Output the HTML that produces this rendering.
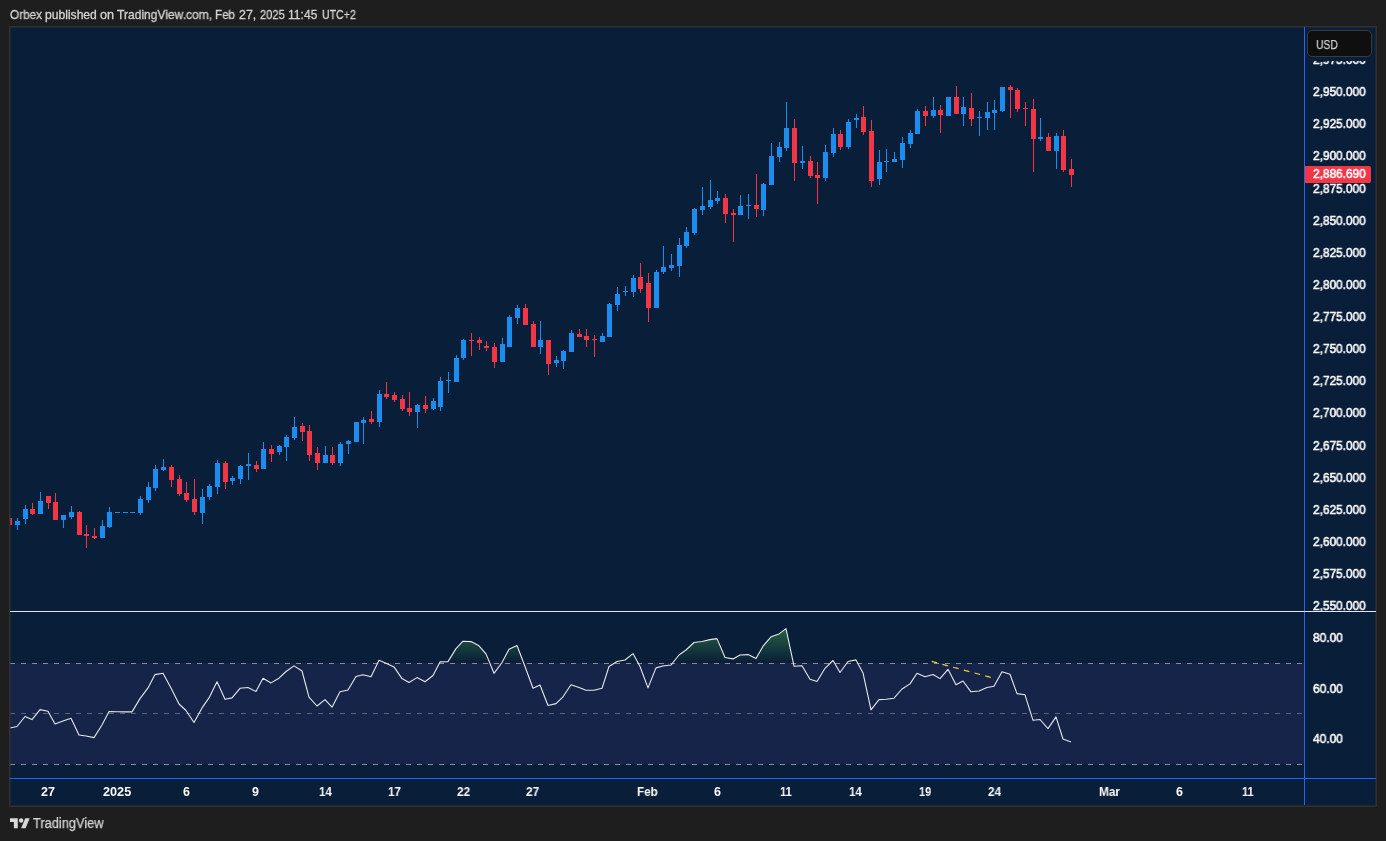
<!DOCTYPE html>
<html><head><meta charset="utf-8"><title>Chart</title>
<style>
html,body{margin:0;padding:0;}
body{width:1386px;height:841px;background:#1e1e1e;overflow:hidden;position:relative;font-family:"Liberation Sans",sans-serif;font-size:12px;color:#e8e8e8;}
.x{position:absolute;height:20px;line-height:20px;white-space:nowrap;transform-origin:0 0;will-change:transform;}
.hdr{position:absolute;left:0;top:0;width:400px;height:26px;}
.h{color:#d4d4d4;display:block;-webkit-text-stroke:0.3px #d4d4d4;}
.p{color:#fcfcfc;-webkit-text-stroke:0.55px #fcfcfc;}
.t{color:#fafafa;font-weight:bold;}
.last{color:#fff;-webkit-text-stroke:0.55px #fff;}
.usd{color:#cfcfcf;-webkit-text-stroke:0.25px #cfcfcf;}
.tv{color:#d4d4d4;-webkit-text-stroke:0.25px #d4d4d4;}
.frame{position:absolute;left:9px;top:26px;width:1366px;height:779px;border:1px solid #303030;background:#091e38;box-sizing:content-box;}
.frame2{position:absolute;left:10px;top:27px;width:1364px;height:777px;border:1px solid rgba(52,50,48,0.5);box-sizing:content-box;}
.chart{position:absolute;left:0;top:0;width:1386px;height:841px;}
svg{position:absolute;left:0;top:0;}
.vline{position:absolute;left:1304px;top:27px;width:1px;height:778px;background:#2962ff;}
.hline{position:absolute;left:10px;top:778px;width:1366px;height:1px;background:#2962ff;}
.sep{position:absolute;left:10px;top:611px;width:1366px;height:1px;background:#e6e8ef;}
.usdcover{position:absolute;left:1305px;top:28px;width:70px;height:32.6px;background:#091e38;}
.usdbox{position:absolute;left:1307.3px;top:30.2px;width:63px;height:25.2px;border:1px solid #3a3a3c;border-radius:5px;background:#0f0f0f;box-sizing:content-box;}
.lastbox{position:absolute;left:1305px;top:166px;width:66px;height:17px;background:#f23645;border-radius:0 2px 2px 0;}
</style></head>
<body>
<div class="hdr"><span class="x h" style="left:9.81px;top:5.25px;font-size:12.1px;transform:scaleX(0.969);">Orbex</span> <span class="x h" style="left:45.38px;top:5.25px;font-size:12.1px;transform:scaleX(1.001);">published</span> <span class="x h" style="left:100.40px;top:5.25px;font-size:12.1px;transform:scaleX(1.042);">on</span> <span class="x h" style="left:117.43px;top:5.25px;font-size:12.1px;transform:scaleX(0.996);">TradingView.com,</span> <span class="x h" style="left:215.43px;top:5.25px;font-size:12.1px;transform:scaleX(0.958);">Feb</span> <span class="x h" style="left:238.90px;top:5.25px;font-size:12.1px;transform:scaleX(1.023);">27,</span> <span class="x h" style="left:259.69px;top:5.25px;font-size:12.1px;transform:scaleX(0.916);">2025</span> <span class="x h" style="left:288.48px;top:5.25px;font-size:12.1px;transform:scaleX(0.995);">11:45</span> <span class="x h" style="left:321.50px;top:5.25px;font-size:12.1px;transform:scaleX(0.877);">UTC+2</span></div>
<div class="frame"></div>
<div class="chart">
<svg width="1386" height="841" viewBox="0 0 1386 841" shape-rendering="crispEdges">
<defs><linearGradient id="g1" x1="0" y1="587" x2="0" y2="663" gradientUnits="userSpaceOnUse"><stop offset="0" stop-color="#4caf50" stop-opacity="1"/><stop offset="1" stop-color="#4caf50" stop-opacity="0"/></linearGradient>
<clipPath id="area"><rect x="10" y="27" width="1294" height="751"/></clipPath></defs>
<g clip-path="url(#area)">
<rect x="10" y="663" width="1294" height="101" fill="#16244a"/>
<line x1="10" y1="663.5" x2="1304" y2="663.5" stroke="#8a8c93" stroke-width="1" stroke-dasharray="5 6" stroke-dashoffset="0"/>
<line x1="10" y1="713.5" x2="1304" y2="713.5" stroke="#5e6478" stroke-width="1" stroke-dasharray="5 6" stroke-dashoffset="0"/>
<line x1="10" y1="764.5" x2="1304" y2="764.5" stroke="#8a8c93" stroke-width="1" stroke-dasharray="5 6" stroke-dashoffset="0"/>
<rect x="9" y="518" width="1" height="7" fill="#f23645"/>
<rect x="7" y="518" width="5" height="7" fill="#f23645"/>
<rect x="17" y="518" width="1" height="12" fill="#1c8cee"/>
<rect x="15" y="521" width="5" height="4" fill="#1c8cee"/>
<rect x="25" y="505" width="1" height="19" fill="#1c8cee"/>
<rect x="23" y="509" width="5" height="10" fill="#1c8cee"/>
<rect x="32" y="503" width="1" height="12" fill="#f23645"/>
<rect x="30" y="509" width="5" height="5" fill="#f23645"/>
<rect x="40" y="492" width="1" height="22" fill="#1c8cee"/>
<rect x="38" y="501" width="5" height="13" fill="#1c8cee"/>
<rect x="48" y="496" width="1" height="13" fill="#f23645"/>
<rect x="46" y="496" width="5" height="7" fill="#f23645"/>
<rect x="55" y="493" width="1" height="27" fill="#f23645"/>
<rect x="53" y="502" width="5" height="18" fill="#f23645"/>
<rect x="63" y="515" width="1" height="13" fill="#1c8cee"/>
<rect x="61" y="515" width="5" height="5" fill="#1c8cee"/>
<rect x="71" y="506" width="1" height="13" fill="#1c8cee"/>
<rect x="69" y="512" width="5" height="5" fill="#1c8cee"/>
<rect x="79" y="511" width="1" height="24" fill="#f23645"/>
<rect x="77" y="512" width="5" height="23" fill="#f23645"/>
<rect x="86" y="525" width="1" height="23" fill="#f23645"/>
<rect x="84" y="534" width="5" height="2" fill="#f23645"/>
<rect x="94" y="528" width="1" height="11" fill="#f23645"/>
<rect x="92" y="536" width="5" height="2" fill="#f23645"/>
<rect x="102" y="520" width="1" height="18" fill="#1c8cee"/>
<rect x="100" y="526" width="5" height="12" fill="#1c8cee"/>
<rect x="109" y="507" width="1" height="21" fill="#1c8cee"/>
<rect x="107" y="512" width="5" height="15" fill="#1c8cee"/>
<rect x="117" y="512" width="1" height="1" fill="#1c8cee"/>
<rect x="115" y="512" width="5" height="1" fill="#1c8cee"/>
<rect x="125" y="512" width="1" height="1" fill="#1c8cee"/>
<rect x="123" y="512" width="5" height="1" fill="#1c8cee"/>
<rect x="132" y="512" width="1" height="1" fill="#1c8cee"/>
<rect x="130" y="512" width="5" height="1" fill="#1c8cee"/>
<rect x="140" y="496" width="1" height="19" fill="#1c8cee"/>
<rect x="138" y="499" width="5" height="14" fill="#1c8cee"/>
<rect x="148" y="482" width="1" height="21" fill="#1c8cee"/>
<rect x="146" y="487" width="5" height="13" fill="#1c8cee"/>
<rect x="155" y="465" width="1" height="26" fill="#1c8cee"/>
<rect x="153" y="469" width="5" height="19" fill="#1c8cee"/>
<rect x="163" y="459" width="1" height="12" fill="#1c8cee"/>
<rect x="161" y="467" width="5" height="3" fill="#1c8cee"/>
<rect x="171" y="465" width="1" height="22" fill="#f23645"/>
<rect x="169" y="467" width="5" height="13" fill="#f23645"/>
<rect x="179" y="475" width="1" height="21" fill="#f23645"/>
<rect x="177" y="479" width="5" height="15" fill="#f23645"/>
<rect x="186" y="482" width="1" height="20" fill="#f23645"/>
<rect x="184" y="493" width="5" height="7" fill="#f23645"/>
<rect x="194" y="479" width="1" height="36" fill="#f23645"/>
<rect x="192" y="499" width="5" height="13" fill="#f23645"/>
<rect x="202" y="489" width="1" height="35" fill="#1c8cee"/>
<rect x="200" y="497" width="5" height="16" fill="#1c8cee"/>
<rect x="209" y="484" width="1" height="16" fill="#1c8cee"/>
<rect x="207" y="486" width="5" height="11" fill="#1c8cee"/>
<rect x="217" y="460" width="1" height="34" fill="#1c8cee"/>
<rect x="215" y="463" width="5" height="24" fill="#1c8cee"/>
<rect x="225" y="461" width="1" height="28" fill="#f23645"/>
<rect x="223" y="463" width="5" height="19" fill="#f23645"/>
<rect x="232" y="476" width="1" height="9" fill="#1c8cee"/>
<rect x="230" y="478" width="5" height="3" fill="#1c8cee"/>
<rect x="240" y="465" width="1" height="19" fill="#1c8cee"/>
<rect x="238" y="466" width="5" height="13" fill="#1c8cee"/>
<rect x="248" y="453" width="1" height="27" fill="#1c8cee"/>
<rect x="246" y="464" width="5" height="2" fill="#1c8cee"/>
<rect x="256" y="461" width="1" height="11" fill="#f23645"/>
<rect x="254" y="465" width="5" height="4" fill="#f23645"/>
<rect x="263" y="442" width="1" height="27" fill="#1c8cee"/>
<rect x="261" y="449" width="5" height="20" fill="#1c8cee"/>
<rect x="271" y="445" width="1" height="17" fill="#f23645"/>
<rect x="269" y="449" width="5" height="5" fill="#f23645"/>
<rect x="279" y="445" width="1" height="10" fill="#1c8cee"/>
<rect x="277" y="446" width="5" height="6" fill="#1c8cee"/>
<rect x="286" y="435" width="1" height="26" fill="#1c8cee"/>
<rect x="284" y="437" width="5" height="10" fill="#1c8cee"/>
<rect x="294" y="417" width="1" height="23" fill="#1c8cee"/>
<rect x="292" y="427" width="5" height="11" fill="#1c8cee"/>
<rect x="302" y="423" width="1" height="18" fill="#f23645"/>
<rect x="300" y="426" width="5" height="6" fill="#f23645"/>
<rect x="309" y="425" width="1" height="36" fill="#f23645"/>
<rect x="307" y="431" width="5" height="24" fill="#f23645"/>
<rect x="317" y="447" width="1" height="23" fill="#f23645"/>
<rect x="315" y="453" width="5" height="10" fill="#f23645"/>
<rect x="325" y="446" width="1" height="17" fill="#1c8cee"/>
<rect x="323" y="455" width="5" height="8" fill="#1c8cee"/>
<rect x="332" y="447" width="1" height="18" fill="#f23645"/>
<rect x="330" y="455" width="5" height="8" fill="#f23645"/>
<rect x="340" y="442" width="1" height="24" fill="#1c8cee"/>
<rect x="338" y="444" width="5" height="19" fill="#1c8cee"/>
<rect x="348" y="440" width="1" height="14" fill="#1c8cee"/>
<rect x="346" y="441" width="5" height="3" fill="#1c8cee"/>
<rect x="356" y="422" width="1" height="20" fill="#1c8cee"/>
<rect x="354" y="422" width="5" height="20" fill="#1c8cee"/>
<rect x="363" y="417" width="1" height="27" fill="#1c8cee"/>
<rect x="361" y="420" width="5" height="3" fill="#1c8cee"/>
<rect x="371" y="411" width="1" height="13" fill="#f23645"/>
<rect x="369" y="419" width="5" height="3" fill="#f23645"/>
<rect x="379" y="390" width="1" height="37" fill="#1c8cee"/>
<rect x="377" y="394" width="5" height="28" fill="#1c8cee"/>
<rect x="386" y="382" width="1" height="17" fill="#f23645"/>
<rect x="384" y="394" width="5" height="3" fill="#f23645"/>
<rect x="394" y="392" width="1" height="10" fill="#f23645"/>
<rect x="392" y="395" width="5" height="5" fill="#f23645"/>
<rect x="402" y="395" width="1" height="16" fill="#f23645"/>
<rect x="400" y="399" width="5" height="10" fill="#f23645"/>
<rect x="409" y="392" width="1" height="24" fill="#f23645"/>
<rect x="407" y="408" width="5" height="4" fill="#f23645"/>
<rect x="417" y="404" width="1" height="24" fill="#1c8cee"/>
<rect x="415" y="405" width="5" height="7" fill="#1c8cee"/>
<rect x="425" y="396" width="1" height="17" fill="#f23645"/>
<rect x="423" y="405" width="5" height="4" fill="#f23645"/>
<rect x="433" y="398" width="1" height="12" fill="#1c8cee"/>
<rect x="431" y="401" width="5" height="8" fill="#1c8cee"/>
<rect x="440" y="377" width="1" height="34" fill="#1c8cee"/>
<rect x="438" y="381" width="5" height="26" fill="#1c8cee"/>
<rect x="448" y="372" width="1" height="21" fill="#1c8cee"/>
<rect x="446" y="380" width="5" height="1" fill="#1c8cee"/>
<rect x="456" y="355" width="1" height="27" fill="#1c8cee"/>
<rect x="454" y="358" width="5" height="24" fill="#1c8cee"/>
<rect x="463" y="339" width="1" height="21" fill="#1c8cee"/>
<rect x="461" y="340" width="5" height="18" fill="#1c8cee"/>
<rect x="471" y="333" width="1" height="23" fill="#f23645"/>
<rect x="469" y="340" width="5" height="1" fill="#f23645"/>
<rect x="479" y="337" width="1" height="13" fill="#f23645"/>
<rect x="477" y="340" width="5" height="3" fill="#f23645"/>
<rect x="486" y="341" width="1" height="10" fill="#f23645"/>
<rect x="484" y="346" width="5" height="2" fill="#f23645"/>
<rect x="494" y="343" width="1" height="25" fill="#f23645"/>
<rect x="492" y="347" width="5" height="15" fill="#f23645"/>
<rect x="502" y="338" width="1" height="24" fill="#1c8cee"/>
<rect x="500" y="344" width="5" height="18" fill="#1c8cee"/>
<rect x="509" y="315" width="1" height="32" fill="#1c8cee"/>
<rect x="507" y="317" width="5" height="30" fill="#1c8cee"/>
<rect x="517" y="305" width="1" height="19" fill="#1c8cee"/>
<rect x="515" y="308" width="5" height="10" fill="#1c8cee"/>
<rect x="525" y="304" width="1" height="21" fill="#f23645"/>
<rect x="523" y="308" width="5" height="17" fill="#f23645"/>
<rect x="533" y="321" width="1" height="26" fill="#f23645"/>
<rect x="531" y="324" width="5" height="23" fill="#f23645"/>
<rect x="540" y="321" width="1" height="33" fill="#1c8cee"/>
<rect x="538" y="340" width="5" height="7" fill="#1c8cee"/>
<rect x="548" y="340" width="1" height="35" fill="#f23645"/>
<rect x="546" y="340" width="5" height="24" fill="#f23645"/>
<rect x="556" y="356" width="1" height="11" fill="#1c8cee"/>
<rect x="554" y="360" width="5" height="3" fill="#1c8cee"/>
<rect x="563" y="350" width="1" height="19" fill="#1c8cee"/>
<rect x="561" y="351" width="5" height="10" fill="#1c8cee"/>
<rect x="571" y="330" width="1" height="22" fill="#1c8cee"/>
<rect x="569" y="333" width="5" height="19" fill="#1c8cee"/>
<rect x="579" y="329" width="1" height="8" fill="#f23645"/>
<rect x="577" y="334" width="5" height="3" fill="#f23645"/>
<rect x="586" y="329" width="1" height="18" fill="#f23645"/>
<rect x="584" y="336" width="5" height="4" fill="#f23645"/>
<rect x="594" y="335" width="1" height="22" fill="#f23645"/>
<rect x="592" y="339" width="5" height="1" fill="#f23645"/>
<rect x="602" y="333" width="1" height="9" fill="#1c8cee"/>
<rect x="600" y="336" width="5" height="6" fill="#1c8cee"/>
<rect x="609" y="303" width="1" height="34" fill="#1c8cee"/>
<rect x="607" y="304" width="5" height="33" fill="#1c8cee"/>
<rect x="617" y="287" width="1" height="24" fill="#1c8cee"/>
<rect x="615" y="294" width="5" height="11" fill="#1c8cee"/>
<rect x="625" y="286" width="1" height="10" fill="#1c8cee"/>
<rect x="623" y="291" width="5" height="1" fill="#1c8cee"/>
<rect x="633" y="275" width="1" height="22" fill="#1c8cee"/>
<rect x="631" y="278" width="5" height="14" fill="#1c8cee"/>
<rect x="640" y="263" width="1" height="30" fill="#f23645"/>
<rect x="638" y="277" width="5" height="12" fill="#f23645"/>
<rect x="648" y="273" width="1" height="49" fill="#f23645"/>
<rect x="646" y="283" width="5" height="25" fill="#f23645"/>
<rect x="656" y="270" width="1" height="38" fill="#1c8cee"/>
<rect x="654" y="272" width="5" height="36" fill="#1c8cee"/>
<rect x="663" y="246" width="1" height="28" fill="#1c8cee"/>
<rect x="661" y="267" width="5" height="5" fill="#1c8cee"/>
<rect x="671" y="254" width="1" height="17" fill="#1c8cee"/>
<rect x="669" y="265" width="5" height="3" fill="#1c8cee"/>
<rect x="679" y="238" width="1" height="39" fill="#1c8cee"/>
<rect x="677" y="245" width="5" height="21" fill="#1c8cee"/>
<rect x="686" y="227" width="1" height="21" fill="#1c8cee"/>
<rect x="684" y="232" width="5" height="14" fill="#1c8cee"/>
<rect x="694" y="208" width="1" height="27" fill="#1c8cee"/>
<rect x="692" y="209" width="5" height="24" fill="#1c8cee"/>
<rect x="702" y="187" width="1" height="28" fill="#1c8cee"/>
<rect x="700" y="206" width="5" height="4" fill="#1c8cee"/>
<rect x="710" y="180" width="1" height="29" fill="#1c8cee"/>
<rect x="708" y="200" width="5" height="7" fill="#1c8cee"/>
<rect x="717" y="191" width="1" height="13" fill="#1c8cee"/>
<rect x="715" y="198" width="5" height="3" fill="#1c8cee"/>
<rect x="725" y="194" width="1" height="29" fill="#f23645"/>
<rect x="723" y="198" width="5" height="16" fill="#f23645"/>
<rect x="733" y="209" width="1" height="33" fill="#f23645"/>
<rect x="731" y="213" width="5" height="2" fill="#f23645"/>
<rect x="740" y="195" width="1" height="20" fill="#1c8cee"/>
<rect x="738" y="206" width="5" height="9" fill="#1c8cee"/>
<rect x="748" y="194" width="1" height="25" fill="#1c8cee"/>
<rect x="746" y="205" width="5" height="1" fill="#1c8cee"/>
<rect x="756" y="174" width="1" height="43" fill="#f23645"/>
<rect x="754" y="205" width="5" height="4" fill="#f23645"/>
<rect x="763" y="183" width="1" height="33" fill="#1c8cee"/>
<rect x="761" y="184" width="5" height="26" fill="#1c8cee"/>
<rect x="771" y="143" width="1" height="42" fill="#1c8cee"/>
<rect x="769" y="156" width="5" height="29" fill="#1c8cee"/>
<rect x="779" y="142" width="1" height="20" fill="#1c8cee"/>
<rect x="777" y="147" width="5" height="10" fill="#1c8cee"/>
<rect x="786" y="102" width="1" height="49" fill="#1c8cee"/>
<rect x="784" y="128" width="5" height="20" fill="#1c8cee"/>
<rect x="794" y="119" width="1" height="62" fill="#f23645"/>
<rect x="792" y="128" width="5" height="35" fill="#f23645"/>
<rect x="802" y="146" width="1" height="23" fill="#1c8cee"/>
<rect x="800" y="161" width="5" height="2" fill="#1c8cee"/>
<rect x="810" y="156" width="1" height="22" fill="#f23645"/>
<rect x="808" y="161" width="5" height="15" fill="#f23645"/>
<rect x="817" y="162" width="1" height="42" fill="#f23645"/>
<rect x="815" y="175" width="5" height="3" fill="#f23645"/>
<rect x="825" y="145" width="1" height="36" fill="#1c8cee"/>
<rect x="823" y="152" width="5" height="26" fill="#1c8cee"/>
<rect x="833" y="128" width="1" height="29" fill="#1c8cee"/>
<rect x="831" y="134" width="5" height="19" fill="#1c8cee"/>
<rect x="840" y="130" width="1" height="20" fill="#f23645"/>
<rect x="838" y="134" width="5" height="13" fill="#f23645"/>
<rect x="848" y="119" width="1" height="30" fill="#1c8cee"/>
<rect x="846" y="122" width="5" height="25" fill="#1c8cee"/>
<rect x="856" y="114" width="1" height="14" fill="#1c8cee"/>
<rect x="854" y="118" width="5" height="2" fill="#1c8cee"/>
<rect x="863" y="106" width="1" height="29" fill="#f23645"/>
<rect x="861" y="117" width="5" height="15" fill="#f23645"/>
<rect x="871" y="120" width="1" height="67" fill="#f23645"/>
<rect x="869" y="131" width="5" height="50" fill="#f23645"/>
<rect x="879" y="150" width="1" height="35" fill="#1c8cee"/>
<rect x="877" y="162" width="5" height="17" fill="#1c8cee"/>
<rect x="886" y="149" width="1" height="23" fill="#1c8cee"/>
<rect x="884" y="161" width="5" height="1" fill="#1c8cee"/>
<rect x="894" y="152" width="1" height="10" fill="#1c8cee"/>
<rect x="892" y="159" width="5" height="3" fill="#1c8cee"/>
<rect x="902" y="137" width="1" height="31" fill="#1c8cee"/>
<rect x="900" y="143" width="5" height="17" fill="#1c8cee"/>
<rect x="910" y="130" width="1" height="18" fill="#1c8cee"/>
<rect x="908" y="133" width="5" height="11" fill="#1c8cee"/>
<rect x="917" y="109" width="1" height="25" fill="#1c8cee"/>
<rect x="915" y="111" width="5" height="23" fill="#1c8cee"/>
<rect x="925" y="106" width="1" height="20" fill="#f23645"/>
<rect x="923" y="111" width="5" height="5" fill="#f23645"/>
<rect x="933" y="97" width="1" height="21" fill="#1c8cee"/>
<rect x="931" y="110" width="5" height="6" fill="#1c8cee"/>
<rect x="940" y="105" width="1" height="28" fill="#f23645"/>
<rect x="938" y="110" width="5" height="5" fill="#f23645"/>
<rect x="948" y="97" width="1" height="19" fill="#1c8cee"/>
<rect x="946" y="97" width="5" height="19" fill="#1c8cee"/>
<rect x="956" y="86" width="1" height="28" fill="#f23645"/>
<rect x="954" y="97" width="5" height="17" fill="#f23645"/>
<rect x="963" y="97" width="1" height="29" fill="#1c8cee"/>
<rect x="961" y="107" width="5" height="7" fill="#1c8cee"/>
<rect x="971" y="93" width="1" height="33" fill="#f23645"/>
<rect x="969" y="108" width="5" height="11" fill="#f23645"/>
<rect x="979" y="111" width="1" height="25" fill="#1c8cee"/>
<rect x="977" y="117" width="5" height="1" fill="#1c8cee"/>
<rect x="987" y="102" width="1" height="28" fill="#1c8cee"/>
<rect x="985" y="112" width="5" height="6" fill="#1c8cee"/>
<rect x="994" y="100" width="1" height="30" fill="#1c8cee"/>
<rect x="992" y="110" width="5" height="3" fill="#1c8cee"/>
<rect x="1002" y="87" width="1" height="25" fill="#1c8cee"/>
<rect x="1000" y="87" width="5" height="24" fill="#1c8cee"/>
<rect x="1010" y="85" width="1" height="33" fill="#f23645"/>
<rect x="1008" y="87" width="5" height="3" fill="#f23645"/>
<rect x="1017" y="88" width="1" height="24" fill="#f23645"/>
<rect x="1015" y="90" width="5" height="19" fill="#f23645"/>
<rect x="1025" y="102" width="1" height="24" fill="#f23645"/>
<rect x="1023" y="108" width="5" height="1" fill="#f23645"/>
<rect x="1033" y="99" width="1" height="73" fill="#f23645"/>
<rect x="1031" y="109" width="5" height="30" fill="#f23645"/>
<rect x="1040" y="118" width="1" height="23" fill="#1c8cee"/>
<rect x="1038" y="137" width="5" height="2" fill="#1c8cee"/>
<rect x="1048" y="133" width="1" height="18" fill="#f23645"/>
<rect x="1046" y="137" width="5" height="14" fill="#f23645"/>
<rect x="1056" y="133" width="1" height="36" fill="#1c8cee"/>
<rect x="1054" y="136" width="5" height="15" fill="#1c8cee"/>
<rect x="1063" y="130" width="1" height="42" fill="#f23645"/>
<rect x="1061" y="136" width="5" height="34" fill="#f23645"/>
<rect x="1071" y="159" width="1" height="28" fill="#f23645"/>
<rect x="1069" y="169" width="5" height="6" fill="#f23645"/>
<clipPath id="ob"><rect x="10" y="612" width="1294" height="51"/></clipPath>
<polygon points="9.0,663 9.0,728.2 17.0,726.5 25.0,716.5 32.0,719.6 40.0,709.6 48.0,711.2 55.0,723.9 63.0,721.0 71.0,718.2 79.0,735.0 86.0,736.0 94.0,737.6 102.0,725.0 109.0,711.5 117.0,711.8 125.0,711.9 132.0,711.9 140.0,698.6 148.0,687.9 155.0,674.6 163.0,673.2 171.0,687.9 179.0,704.0 186.0,710.5 194.0,722.5 202.0,707.9 209.0,697.9 217.0,681.8 225.0,699.3 232.0,697.9 240.0,688.3 248.0,687.5 256.0,691.5 263.0,678.3 271.0,682.9 279.0,678.2 286.0,671.5 294.0,665.9 302.0,671.0 309.0,697.2 317.0,706.0 325.0,699.6 332.0,707.2 340.0,691.8 348.0,690.0 356.0,676.5 363.0,674.8 371.0,676.8 379.0,660.3 386.0,663.2 394.0,666.9 402.0,678.6 409.0,682.5 417.0,677.6 425.0,681.8 433.0,675.5 440.0,661.9 448.0,661.6 456.0,648.6 463.0,641.2 471.0,641.6 479.0,645.8 486.0,653.9 494.0,673.3 502.0,662.5 509.0,649.2 517.0,645.5 525.0,666.5 533.0,688.3 540.0,685.0 548.0,705.5 556.0,703.6 563.0,696.8 571.0,684.8 579.0,687.6 586.0,690.3 594.0,690.3 602.0,688.3 609.0,666.5 617.0,661.5 625.0,660.0 633.0,653.6 640.0,666.5 648.0,687.9 656.0,667.9 663.0,666.0 671.0,665.0 679.0,655.0 686.0,650.0 694.0,642.5 702.0,641.5 710.0,639.6 717.0,638.6 725.0,657.5 733.0,658.9 740.0,655.0 748.0,654.6 756.0,658.6 763.0,646.2 771.0,636.8 779.0,633.9 786.0,628.6 794.0,666.2 802.0,665.8 810.0,679.3 817.0,681.5 825.0,668.3 833.0,660.5 840.0,672.5 848.0,661.5 856.0,659.9 863.0,672.9 871.0,709.8 879.0,699.6 886.0,699.3 894.0,698.2 902.0,689.0 910.0,683.9 917.0,673.3 925.0,676.8 933.0,674.5 940.0,678.6 948.0,669.3 956.0,684.8 963.0,681.0 971.0,691.8 979.0,691.0 987.0,687.5 994.0,686.3 1002.0,671.8 1010.0,674.3 1017.0,693.6 1025.0,694.8 1033.0,720.3 1040.0,719.5 1048.0,728.6 1056.0,716.9 1063.0,739.0 1071.0,741.9 1071.0,663" fill="url(#g1)" clip-path="url(#ob)"/>
<polyline points="9.0,728.2 17.0,726.5 25.0,716.5 32.0,719.6 40.0,709.6 48.0,711.2 55.0,723.9 63.0,721.0 71.0,718.2 79.0,735.0 86.0,736.0 94.0,737.6 102.0,725.0 109.0,711.5 117.0,711.8 125.0,711.9 132.0,711.9 140.0,698.6 148.0,687.9 155.0,674.6 163.0,673.2 171.0,687.9 179.0,704.0 186.0,710.5 194.0,722.5 202.0,707.9 209.0,697.9 217.0,681.8 225.0,699.3 232.0,697.9 240.0,688.3 248.0,687.5 256.0,691.5 263.0,678.3 271.0,682.9 279.0,678.2 286.0,671.5 294.0,665.9 302.0,671.0 309.0,697.2 317.0,706.0 325.0,699.6 332.0,707.2 340.0,691.8 348.0,690.0 356.0,676.5 363.0,674.8 371.0,676.8 379.0,660.3 386.0,663.2 394.0,666.9 402.0,678.6 409.0,682.5 417.0,677.6 425.0,681.8 433.0,675.5 440.0,661.9 448.0,661.6 456.0,648.6 463.0,641.2 471.0,641.6 479.0,645.8 486.0,653.9 494.0,673.3 502.0,662.5 509.0,649.2 517.0,645.5 525.0,666.5 533.0,688.3 540.0,685.0 548.0,705.5 556.0,703.6 563.0,696.8 571.0,684.8 579.0,687.6 586.0,690.3 594.0,690.3 602.0,688.3 609.0,666.5 617.0,661.5 625.0,660.0 633.0,653.6 640.0,666.5 648.0,687.9 656.0,667.9 663.0,666.0 671.0,665.0 679.0,655.0 686.0,650.0 694.0,642.5 702.0,641.5 710.0,639.6 717.0,638.6 725.0,657.5 733.0,658.9 740.0,655.0 748.0,654.6 756.0,658.6 763.0,646.2 771.0,636.8 779.0,633.9 786.0,628.6 794.0,666.2 802.0,665.8 810.0,679.3 817.0,681.5 825.0,668.3 833.0,660.5 840.0,672.5 848.0,661.5 856.0,659.9 863.0,672.9 871.0,709.8 879.0,699.6 886.0,699.3 894.0,698.2 902.0,689.0 910.0,683.9 917.0,673.3 925.0,676.8 933.0,674.5 940.0,678.6 948.0,669.3 956.0,684.8 963.0,681.0 971.0,691.8 979.0,691.0 987.0,687.5 994.0,686.3 1002.0,671.8 1010.0,674.3 1017.0,693.6 1025.0,694.8 1033.0,720.3 1040.0,719.5 1048.0,728.6 1056.0,716.9 1063.0,739.0 1071.0,741.9" fill="none" stroke="#e6e8ee" stroke-width="1.1" stroke-linejoin="round" shape-rendering="geometricPrecision"/>
<line x1="931.7" y1="661.4" x2="990.7" y2="677.4" stroke="#e6d23c" stroke-width="1.2" stroke-dasharray="5.7 5.4" shape-rendering="geometricPrecision"/>
</g>
</svg>
<div class="x p" style="left:1313.02px;top:49.65px;font-size:12.5px;transform:scaleX(0.948);">2,975.000</div><div class="x p" style="left:1313.02px;top:81.65px;font-size:12.5px;transform:scaleX(0.948);">2,950.000</div><div class="x p" style="left:1313.02px;top:113.65px;font-size:12.5px;transform:scaleX(0.948);">2,925.000</div><div class="x p" style="left:1313.02px;top:145.65px;font-size:12.5px;transform:scaleX(0.948);">2,900.000</div><div class="x p" style="left:1313.02px;top:178.65px;font-size:12.5px;transform:scaleX(0.948);">2,875.000</div><div class="x p" style="left:1313.02px;top:210.65px;font-size:12.5px;transform:scaleX(0.948);">2,850.000</div><div class="x p" style="left:1313.02px;top:242.65px;font-size:12.5px;transform:scaleX(0.948);">2,825.000</div><div class="x p" style="left:1313.02px;top:274.65px;font-size:12.5px;transform:scaleX(0.948);">2,800.000</div><div class="x p" style="left:1313.02px;top:306.65px;font-size:12.5px;transform:scaleX(0.948);">2,775.000</div><div class="x p" style="left:1313.02px;top:338.65px;font-size:12.5px;transform:scaleX(0.948);">2,750.000</div><div class="x p" style="left:1313.02px;top:370.65px;font-size:12.5px;transform:scaleX(0.948);">2,725.000</div><div class="x p" style="left:1313.02px;top:402.65px;font-size:12.5px;transform:scaleX(0.948);">2,700.000</div><div class="x p" style="left:1313.02px;top:435.65px;font-size:12.5px;transform:scaleX(0.948);">2,675.000</div><div class="x p" style="left:1313.02px;top:467.65px;font-size:12.5px;transform:scaleX(0.948);">2,650.000</div><div class="x p" style="left:1313.02px;top:499.65px;font-size:12.5px;transform:scaleX(0.948);">2,625.000</div><div class="x p" style="left:1313.02px;top:531.65px;font-size:12.5px;transform:scaleX(0.948);">2,600.000</div><div class="x p" style="left:1313.02px;top:563.65px;font-size:12.5px;transform:scaleX(0.948);">2,575.000</div><div class="x p" style="left:1313.02px;top:595.65px;font-size:12.5px;transform:scaleX(0.948);">2,550.000</div><div class="x p" style="left:1312.93px;top:628.00px;font-size:12.5px;transform:scaleX(0.952);">80.00</div><div class="x p" style="left:1312.91px;top:678.50px;font-size:12.5px;transform:scaleX(0.953);">60.00</div><div class="x p" style="left:1312.94px;top:729.00px;font-size:12.5px;transform:scaleX(0.952);">40.00</div>
<div class="usdcover"></div><div class="usdbox"></div><div class="x usd" style="left:1316.38px;top:34.90px;font-size:12.5px;transform:scaleX(0.83);">USD</div>
<div class="lastbox"></div><div class="x last" style="left:1313.02px;top:163.65px;font-size:12.5px;transform:scaleX(0.948);">2,886.690</div>
<div class="frame2"></div>
<div class="vline"></div>
<div class="hline"></div>
<div class="sep"></div>
<div class="x t" style="left:40.95px;top:782.05px;font-size:12.5px;transform:scaleX(0.965);">27</div><div class="x t" style="left:103.08px;top:782.05px;font-size:12.5px;transform:scaleX(1.014);">2025</div><div class="x t" style="left:182.90px;top:782.05px;font-size:12.5px;">6</div><div class="x t" style="left:252.40px;top:782.05px;font-size:12.5px;">9</div><div class="x t" style="left:318.57px;top:782.05px;font-size:12.5px;transform:scaleX(0.921);">14</div><div class="x t" style="left:387.76px;top:782.05px;font-size:12.5px;transform:scaleX(0.928);">17</div><div class="x t" style="left:456.72px;top:782.05px;font-size:12.5px;transform:scaleX(0.947);">22</div><div class="x t" style="left:526.22px;top:782.05px;font-size:12.5px;transform:scaleX(0.95);">27</div><div class="x t" style="left:637.43px;top:782.05px;font-size:12.5px;transform:scaleX(0.935);">Feb</div><div class="x t" style="left:713.54px;top:782.05px;font-size:12.5px;">6</div><div class="x t" style="left:780.43px;top:782.05px;font-size:12.5px;transform:scaleX(0.891);">11</div><div class="x t" style="left:849.37px;top:782.05px;font-size:12.5px;transform:scaleX(0.914);">14</div><div class="x t" style="left:918.95px;top:782.05px;font-size:12.5px;transform:scaleX(0.878);">19</div><div class="x t" style="left:987.89px;top:782.05px;font-size:12.5px;transform:scaleX(0.944);">24</div><div class="x t" style="left:1098.72px;top:782.05px;font-size:12.5px;transform:scaleX(0.945);">Mar</div><div class="x t" style="left:1175.54px;top:782.05px;font-size:12.5px;">6</div><div class="x t" style="left:1242.13px;top:782.05px;font-size:12.5px;transform:scaleX(0.883);">11</div>
</div>
<svg width="20" height="15.56" viewBox="0 0 36 28" style="left:10px;top:815.8px" shape-rendering="geometricPrecision"><path fill="#d9d9d9" d="M14 22H7V11H0V4h14v18zM28 22h-8l7.5-18h8L28 22z"/><circle cx="20" cy="8" r="4" fill="#d9d9d9"/></svg>
<div class="x tv" style="left:32.92px;top:814.05px;font-size:13.8px;transform:scaleX(0.929);">TradingView</div>
</body></html>
